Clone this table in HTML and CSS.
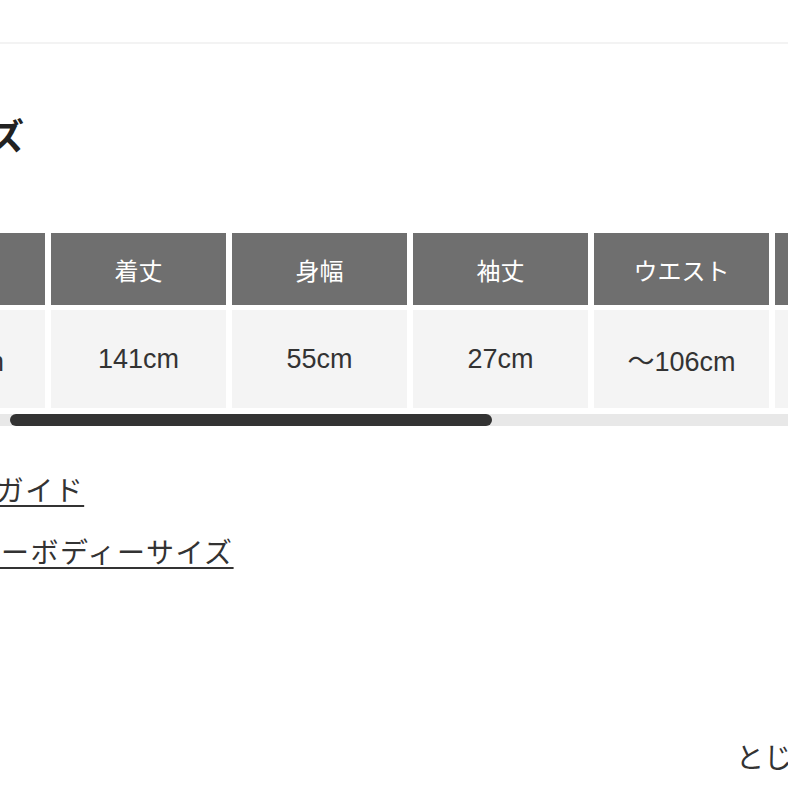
FILE: index.html
```html
<!DOCTYPE html>
<html lang="ja">
<head>
<meta charset="utf-8">
<link rel="stylesheet" href="styles.css">
</head>
<body>
<div class="topbar"></div>
<main class="content">
  <h2 class="title">サイズ</h2>
  <div class="table-scroll">
    <div class="row head">
      <div class="cell">サイズ</div>
      <div class="cell">着丈</div>
      <div class="cell">身幅</div>
      <div class="cell">袖丈</div>
      <div class="cell">ウエスト</div>
      <div class="cell">ヒップ</div>
    </div>
    <div class="row body">
      <div class="cell">～86cm</div>
      <div class="cell">141cm</div>
      <div class="cell">55cm</div>
      <div class="cell">27cm</div>
      <div class="cell">～106cm</div>
      <div class="cell">110cm</div>
    </div>
  </div>
  <div class="track"><div class="thumb"></div></div>
  <ul class="links">
    <li class="link-a"><a href="#">サイズガイド</a></li>
    <li class="link-b"><a href="#">ユーザーボディーサイズ</a></li>
  </ul>
  <div class="close-row"><span class="close">とじる</span></div>
</main>
</body>
</html>
```
FILE: styles.css
```css
html, body {
  margin: 0;
  padding: 0;
  overflow: hidden;
  background: #ffffff;
}
body {
  width: 788px;
  height: 788px;
  font-family: "Liberation Sans", "Noto Sans CJK JP", sans-serif;
  color: #333333;
}
.topbar {
  height: 42px;
  border-bottom: 2px solid #f3f3f3;
}
.content {
  overflow: hidden;
}
.title {
  margin: 63px 0 0 -83px;
  font-family: "Noto Sans CJK JP", sans-serif;
  font-size: 36px;
  font-weight: 700;
  line-height: 54px;
  color: #222222;
}
.table-scroll {
  margin: 72px 0 0 -130px;
  overflow: hidden;
}
.row {
  display: flex;
  gap: 6px;
  flex-wrap: nowrap;
}
.cell {
  flex: 0 0 175px;
  display: flex;
  align-items: center;
  justify-content: center;
  white-space: nowrap;
}
.head .cell {
  height: 72px;
  background: #6f6f6f;
  color: #ffffff;
  font-family: "Noto Sans CJK JP", sans-serif;
  font-size: 24px;
}
.body {
  margin-top: 5px;
}
.body .cell {
  height: 98px;
  background: #f4f4f4;
  color: #333333;
  font-size: 27px;
}
.track {
  margin-top: 6px;
  height: 12px;
  background: #e8e8e8;
}
.thumb {
  margin-left: 10px;
  width: 482px;
  height: 12px;
  border-radius: 6px;
  background: #333333;
}
.links {
  list-style: none;
  margin: 43px 0 0 0;
  padding: 0;
  display: flex;
  flex-direction: column;
  gap: 22px;
  font-family: "Noto Sans CJK JP", sans-serif;
  font-size: 28px;
  letter-spacing: 1.5px;
  line-height: 40px;
  white-space: nowrap;
}
.links a {
  color: #333333;
  text-decoration: underline;
  text-decoration-thickness: 2px;
  text-underline-offset: 4px;
}
.link-a {
  margin-left: -92px;
}
.link-b {
  margin-left: -87px;
}
.close-row {
  margin-top: 165px;
  display: flex;
  justify-content: flex-end;
  margin-right: -32px;
}
.close {
  font-family: "Noto Sans CJK JP", sans-serif;
  font-size: 28px;
  line-height: 40px;
  color: #333333;
  white-space: nowrap;
}
```
